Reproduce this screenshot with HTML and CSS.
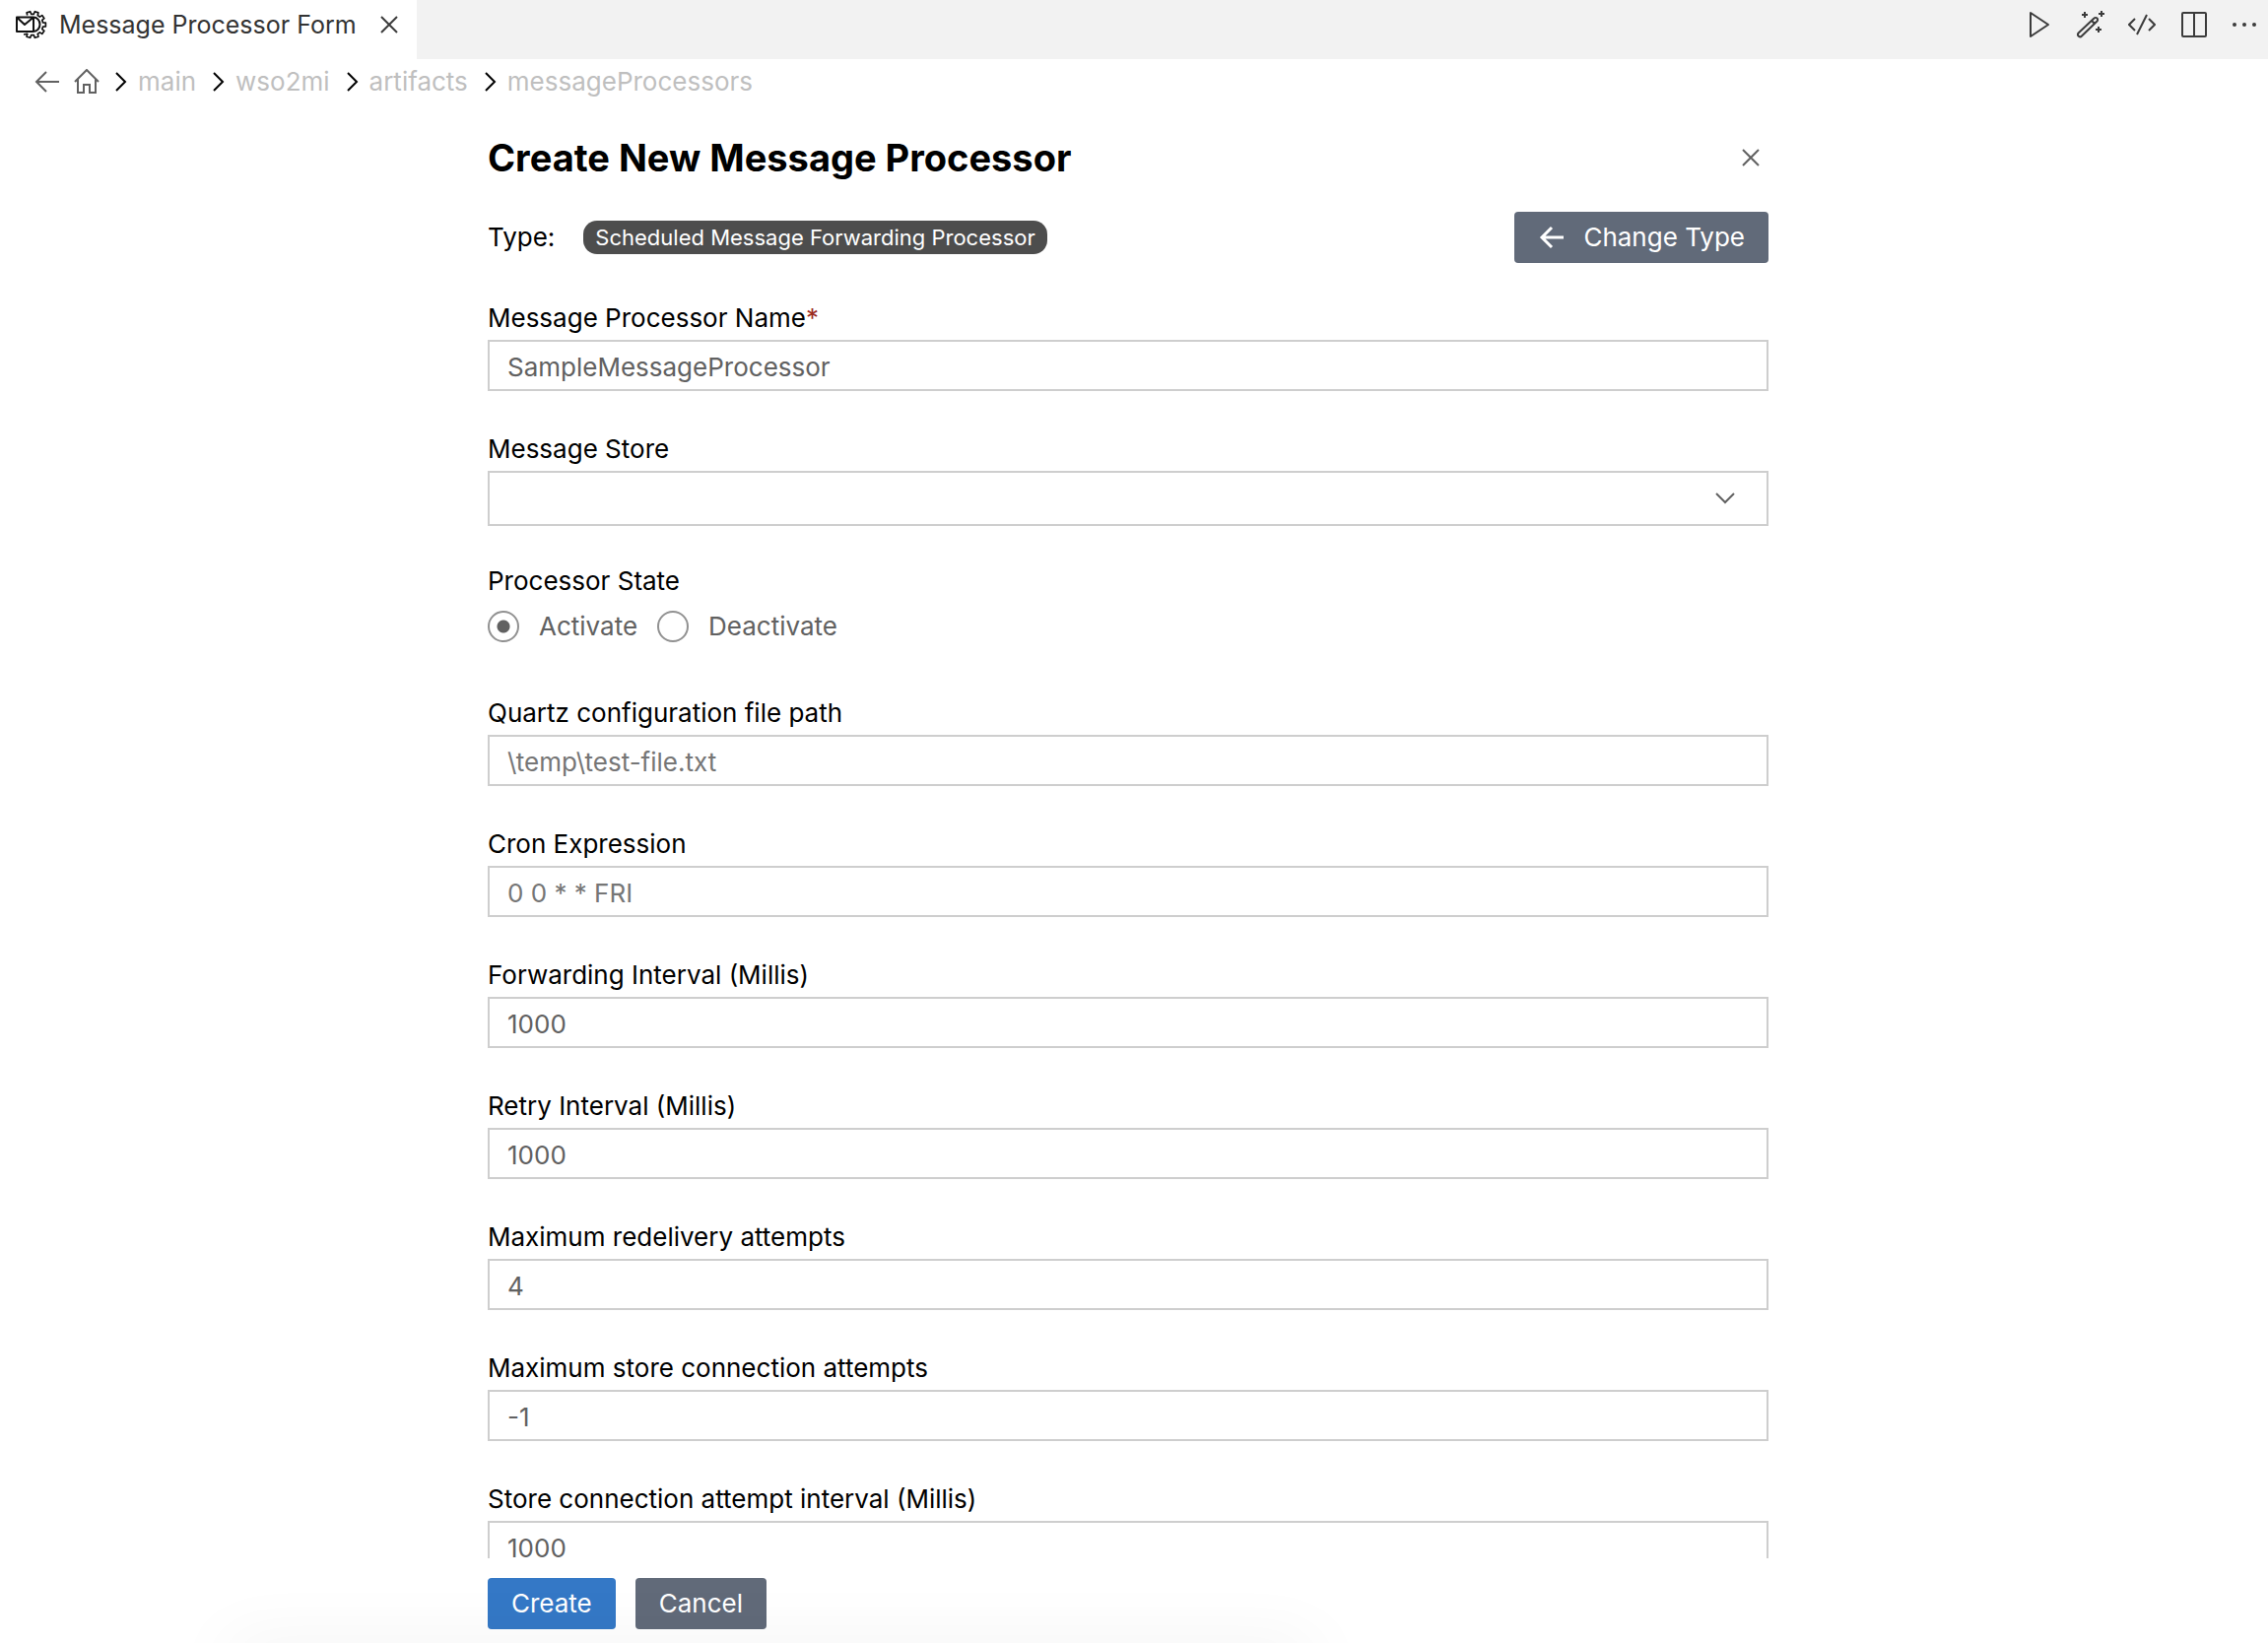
FILE: index.html
```html
<!DOCTYPE html>
<html lang="en">
<head>
<meta charset="utf-8">
<title>Message Processor Form</title>
<link rel="stylesheet" href="styles.css">
</head>
<body>
<header class="tabbar">
  <div class="tab">
    <svg viewBox="0 0 32 32" width="32" height="32" fill="none" stroke="#111" stroke-width="2" stroke-linejoin="round">
      <path d="M1 8.500h17v14.500H1zM1 8.500l8 7.500 9-7.500M18 8.500a6.500 7.250 0 0 1 0 14.500"/>
      <path transform="translate(0 1)" stroke-width="1.700" d="M11.760 5.550L11.080 2.870 14.660 1.710 15.680 4.280 18.320 4.280 19.340 1.710 22.920 2.870 22.240 5.550 24.370 7.100 26.710 5.620 28.920 8.660 26.790 10.440 27.600 12.940 30.370 13.120 30.370 16.880 27.600 17.060 26.790 19.560 28.920 21.340 26.710 24.380 24.370 22.900 22.240 24.450 22.920 27.130 19.340 28.290 18.320 25.720 15.680 25.720 14.660 28.290 11.080 27.130 11.760 24.450 8 25"/>
    </svg>
    <span>Message Processor Form</span>
    <button class="icon-button" type="button" aria-label="Close tab">
      <svg viewBox="0 0 18 18" width="18" height="18" fill="none" stroke="#3b3b3b" stroke-width="2"><path d="M1 1l16 16M17 1L1 17"/></svg>
    </button>
  </div>
  <div class="actions">
    <button class="icon-button" type="button" aria-label="Run">
      <svg viewBox="0 0 28 28" width="28" height="28" fill="none" stroke="#3b3b3b" stroke-width="2" stroke-linejoin="round"><path d="M5 2v24l18-12z"/></svg>
    </button>
    <button class="icon-button" type="button" aria-label="Generate">
      <svg viewBox="0 0 28 28" width="28" height="28" fill="none" stroke="#3b3b3b" stroke-width="2"><path d="M1.600 22.500L17.500 7.500a2 2 0 0 1 3 3L5 25.500a2 2 0 0 1-3.400-3zM15 10l3 3M8 1v6M5 4h6M25 0v6M22 3h6M22 16v6M19 19h6"/></svg>
    </button>
    <button class="icon-button" type="button" aria-label="Show source">
      <svg viewBox="0 0 28 28" width="28" height="28" fill="none" stroke="#3b3b3b" stroke-width="2"><path d="M7 8l-6 6 6 6M21 8l6 6-6 6M19 4L9 24"/></svg>
    </button>
    <button class="icon-button" type="button" aria-label="Split editor">
      <svg viewBox="0 0 28 28" width="28" height="28" fill="none" stroke="#3b3b3b" stroke-width="2"><rect x="3" y="2" width="24" height="24" rx="1"/><path d="M15 2v24"/></svg>
    </button>
    <button class="icon-button" type="button" aria-label="More actions">
      <svg viewBox="0 0 28 28" width="28" height="28" fill="#3b3b3b"><circle cx="4" cy="14" r="2"/><circle cx="14" cy="14" r="2"/><circle cx="24" cy="14" r="2"/></svg>
    </button>
  </div>
</header>

<nav class="breadcrumb" aria-label="Breadcrumb">
  <button class="icon-button" type="button" aria-label="Back">
    <svg viewBox="0 0 26 26" width="26" height="26" fill="none" stroke="#616161" stroke-width="2"><path d="M25 13H2M12 3L2 13l10 10"/></svg>
  </button>
  <button class="icon-button home" type="button" aria-label="Home">
    <svg viewBox="0 0 26 26" width="26" height="26" fill="none" stroke="#616161" stroke-width="2"><path d="M1 13L13 1l12 12M4 10v14h6v-8h6v8h6V10"/></svg>
  </button>
  <svg class="sep" viewBox="0 0 12 20" width="12" height="20"><path d="M1 1l9 9-9 9"/></svg>
  <a href="#main">main</a>
  <svg class="sep" viewBox="0 0 12 20" width="12" height="20"><path d="M1 1l9 9-9 9"/></svg>
  <a href="#wso2mi">wso2mi</a>
  <svg class="sep" viewBox="0 0 12 20" width="12" height="20"><path d="M1 1l9 9-9 9"/></svg>
  <a href="#artifacts">artifacts</a>
  <svg class="sep" viewBox="0 0 12 20" width="12" height="20"><path d="M1 1l9 9-9 9"/></svg>
  <a href="#messageProcessors">messageProcessors</a>
</nav>

<form class="panel">
  <div class="title-row">
    <h1>Create New Message Processor</h1>
    <button class="icon-button" type="button" aria-label="Close form">
      <svg viewBox="0 0 18 18" width="18" height="18" fill="none" stroke="#616161" stroke-width="2"><path d="M1 1l16 16M17 1L1 17"/></svg>
    </button>
  </div>
  <div class="type-row">
    <span>Type:</span>
    <span class="tag">Scheduled Message Forwarding Processor</span>
    <button class="button secondary change" type="button">
      <svg viewBox="0 0 26 26" width="26" height="26" fill="none" stroke="#fff" stroke-width="3"><path d="M26 13H4M14 3L4 13l10 10"/></svg>
      Change Type
    </button>
  </div>

  <div class="fields">
    <div class="field">
      <label for="name">Message Processor Name<span class="required">*</span></label>
      <input id="name" type="text" value="SampleMessageProcessor">
    </div>
    <div class="field select-field">
      <label for="store">Message Store</label>
      <select id="store"><option></option></select>
    </div>
    <fieldset class="field radio-field">
      <legend>Processor State</legend>
      <div class="radios">
        <label><input type="radio" name="state" checked>Activate</label>
        <label><input type="radio" name="state">Deactivate</label>
      </div>
    </fieldset>
    <div class="field">
      <label for="quartz">Quartz configuration file path</label>
      <input id="quartz" type="text" placeholder="\temp\test-file.txt">
    </div>
    <div class="field">
      <label for="cron">Cron Expression</label>
      <input id="cron" type="text" placeholder="0 0 * * FRI">
    </div>
    <div class="field">
      <label for="forward">Forwarding Interval (Millis)</label>
      <input id="forward" type="text" value="1000">
    </div>
    <div class="field">
      <label for="retry">Retry Interval (Millis)</label>
      <input id="retry" type="text" value="1000">
    </div>
    <div class="field">
      <label for="redelivery">Maximum redelivery attempts</label>
      <input id="redelivery" type="text" value="4">
    </div>
    <div class="field">
      <label for="connections">Maximum store connection attempts</label>
      <input id="connections" type="text" value="-1">
    </div>
    <div class="field">
      <label for="interval">Store connection attempt interval (Millis)</label>
      <input id="interval" type="text" value="1000">
    </div>
  </div>

  <div class="footer">
    <button class="button primary" type="submit">Create</button>
    <button class="button secondary" type="button">Cancel</button>
  </div>
</form>
</body>
</html>
```
FILE: styles.css
```css
* {
  box-sizing: border-box;
}

body {
  position: relative;
  margin: 0;
  height: 100vh;
  display: flex;
  flex-direction: column;
  overflow: hidden;
  background: #fff;
  color: #000;
  font: 26px/32px Inter, "Liberation Sans", sans-serif;
}

/* soft shade along the lower edge of the window */
body::after {
  content: "";
  position: absolute;
  top: 100%;
  left: 10%;
  right: 42%;
  height: 40px;
  box-shadow: 0 0 70px rgba(0, 0, 0, 0.06);
  pointer-events: none;
}

button,
input,
select {
  font: inherit;
}

svg {
  display: block;
  flex: none;
}

.icon-button {
  display: block;
  padding: 0;
  border: 0;
  background: none;
}

.tabbar {
  flex: none;
  height: 60px;
  display: flex;
  justify-content: space-between;
  background: #f2f2f2;
}

.tab {
  display: flex;
  align-items: center;
  padding: 0 19px 10px 16px;
  background: #fff;
  color: #333;
  font-size: 25px;
}

.tab span {
  margin: 0 24px 0 12px;
}

.actions {
  display: flex;
  align-items: center;
  gap: 24px;
  padding: 0 10px 10px 0;
}

.breadcrumb {
  flex: none;
  height: 46px;
  display: flex;
  align-items: center;
  padding-left: 35px;
}

.home {
  margin: 0 16px 0 14px;
}

.sep {
  fill: none;
  stroke: #000;
  stroke-width: 2;
}

.breadcrumb a {
  margin: 0 17px 0 11px;
  color: #bfbfbf;
  text-decoration: none;
}

.panel {
  flex: 1;
  min-height: 0;
  width: 1300px;
  max-width: 100%;
  margin: 0 0 0 495px;
  display: flex;
  flex-direction: column;
}

.title-row {
  display: flex;
  align-items: center;
  justify-content: space-between;
  padding: 30px 9px 31px 0;
}

h1 {
  margin: 0;
  font-size: 38px;
  line-height: 48px;
  font-weight: 700;
}

.type-row {
  display: flex;
  align-items: center;
}

.tag {
  margin-left: 29px;
  padding: 0 12px;
  border-radius: 14px;
  background: #4d4d4d;
  color: #fff;
  font-size: 22px;
  line-height: 34px;
}

.button {
  height: 52px;
  padding: 0 24px;
  border: 0;
  border-radius: 4px;
  color: #fff;
}

.primary {
  background: #3478c6;
}

.secondary {
  background: #616a79;
}

.change {
  display: flex;
  align-items: center;
  gap: 20px;
  margin-left: auto;
}

.fields {
  flex: 1;
  min-height: 0;
  overflow: hidden;
  padding-top: 40px;
}

.field {
  display: flex;
  flex-direction: column;
  gap: 6px;
  margin: 0 0 43px;
  padding: 0;
  border: 0;
}

.required {
  color: #9b2c1f;
}

.field > input,
select {
  width: 100%;
  height: 52px;
  padding: 2px 18px 0;
  border: 2px solid #cecece;
  border-radius: 0;
  background: #fff;
  color: #616161;
}

.field > input::placeholder {
  color: #767676;
  opacity: 1;
}

.select-field {
  margin-bottom: 40px;
}

.select-field select {
  height: 56px;
  appearance: none;
  background: #fff url("data:image/svg+xml,%3Csvg xmlns='http://www.w3.org/2000/svg' width='20' height='12' fill='none' stroke='%23616161' stroke-width='2'%3E%3Cpath d='M1 1l9 9 9-9'/%3E%3C/svg%3E") no-repeat right 32px center;
}

.radio-field {
  display: block;
  margin-bottom: 56px;
}

legend {
  padding: 0;
}

.radios {
  display: flex;
  gap: 20px;
  padding-top: 14px;
  color: #616161;
}

.radios label {
  display: flex;
  align-items: center;
  gap: 20px;
}

.radios input {
  appearance: none;
  width: 32px;
  height: 32px;
  margin: 0;
  border: 2px solid #919191;
  border-radius: 50%;
}

.radios input:checked {
  background: radial-gradient(circle, #616161 6px, transparent 7px);
}

.footer {
  flex: none;
  display: flex;
  gap: 20px;
  padding: 20px 0 14px;
}
```
